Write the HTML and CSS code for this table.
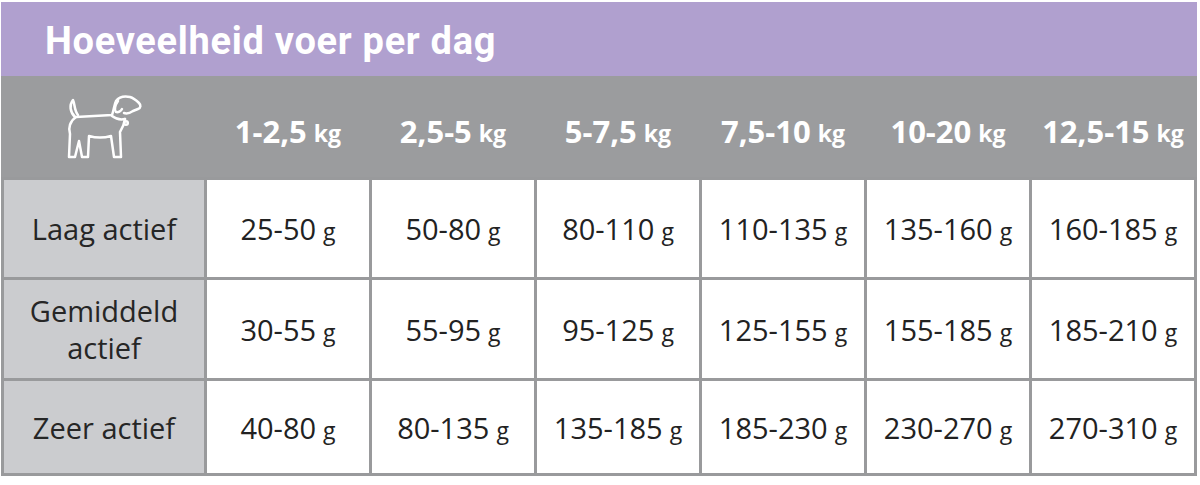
FILE: index.html
```html
<!DOCTYPE html>
<html lang="nl">
<head>
<meta charset="utf-8">
<title>Hoeveelheid voer per dag</title>
<link rel="stylesheet" href="styles.css">
</head>
<body>
<div class="sheet">
  <div class="title">Hoeveelheid voer per dag</div>
  <div class="grid">
    <div class="hcell icon-cell">
      <svg class="dog" viewBox="60 92 86 72" width="86" height="72" fill="none" stroke="#fff" stroke-width="2.5" stroke-linecap="round" stroke-linejoin="round">
        <path d="M75 117 C70 112 69 105 73 100 C75 104 74 110 78 115"/>
        <path d="M76 117 L112 115 C114 110 114 105 116 101 C119 97 125 96 130 97 C134 98 137 101 139 103 C141 105 141 108 138 109 L133 111 C130 113 127 114 124 113"/>
        <path d="M118 101 C115 105 114 110 116 112 C118 113 121 111 122 109"/>
        <path d="M112 116 C116 119 121 120 125 119"/>
        <circle cx="126" cy="123" r="1.8"/>
        <path d="M125 119 C124 125 122 129 120 132 L121 157 L114 157 L111 136 C104 138 96 138 89 136 L88 157 L82 157 L79 141 L75 157 L69 157 L70 134 C68 128 70 121 76 117"/>
      </svg>
    </div>
    <div class="hcell">1-2,5<span class="u">kg</span></div>
    <div class="hcell">2,5-5<span class="u">kg</span></div>
    <div class="hcell">5-7,5<span class="u">kg</span></div>
    <div class="hcell">7,5-10<span class="u">kg</span></div>
    <div class="hcell">10-20<span class="u">kg</span></div>
    <div class="hcell">12,5-15<span class="u">kg</span></div>

    <div class="lcell">Laag actief</div>
    <div class="cell">25-50<span class="u">g</span></div>
    <div class="cell">50-80<span class="u">g</span></div>
    <div class="cell">80-110<span class="u">g</span></div>
    <div class="cell">110-135<span class="u">g</span></div>
    <div class="cell">135-160<span class="u">g</span></div>
    <div class="cell">160-185<span class="u">g</span></div>

    <div class="lcell">Gemiddeld<br>actief</div>
    <div class="cell">30-55<span class="u">g</span></div>
    <div class="cell">55-95<span class="u">g</span></div>
    <div class="cell">95-125<span class="u">g</span></div>
    <div class="cell">125-155<span class="u">g</span></div>
    <div class="cell">155-185<span class="u">g</span></div>
    <div class="cell">185-210<span class="u">g</span></div>

    <div class="lcell">Zeer actief</div>
    <div class="cell">40-80<span class="u">g</span></div>
    <div class="cell">80-135<span class="u">g</span></div>
    <div class="cell">135-185<span class="u">g</span></div>
    <div class="cell">185-230<span class="u">g</span></div>
    <div class="cell">230-270<span class="u">g</span></div>
    <div class="cell">270-310<span class="u">g</span></div>
  </div>
</div>
</body>
</html>
```
FILE: styles.css
```css
html, body {
  margin: 0;
  padding: 0;
  background: #ffffff;
}
.sheet {
  width: 1196px;
  margin: 2px 0 0 1px;
}
.title {
  height: 74px;
  background: #b0a0cf;
  color: #ffffff;
  font-family: Roboto, "Liberation Sans", sans-serif;
  font-weight: 700;
  font-size: 38px;
  letter-spacing: 0.7px;
  display: flex;
  align-items: center;
  padding-left: 44px;
  padding-top: 4px;
  box-sizing: border-box;
}
.grid {
  display: grid;
  grid-template-columns: 200px repeat(6, 1fr);
  grid-template-rows: 101px 97px 98px 92px;
  gap: 3px;
  padding: 0 3px 3px 3px;
  background: #999a9c;
}
.hcell {
  background: #9b9c9e;
  margin-right: -3px;
  color: #ffffff;
  font-family: "Open Sans", "Liberation Sans", sans-serif;
  font-weight: 700;
  font-size: 31px;
  display: flex;
  align-items: center;
  justify-content: center;
  padding-top: 8px;
  padding-right: 3px;
  box-sizing: border-box;
}
.hcell:last-child {
  margin-right: 0;
}
.hcell .u {
  font-size: 23px;
  margin-left: 7px;
  padding-top: 5px;
}
.icon-cell {
  margin-left: -3px;
  padding-top: 0;
  align-items: flex-start;
  justify-content: flex-start;
  padding-left: 59px;
}
.dog {
  display: block;
  margin-top: 16px;
}
.lcell {
  background: #cbcccf;
  color: #262626;
  font-family: "Open Sans", "Liberation Sans", sans-serif;
  font-size: 29px;
  line-height: 37px;
  text-align: center;
  display: flex;
  align-items: center;
  justify-content: center;
}
.cell {
  background: #ffffff;
  color: #222222;
  font-family: "Open Sans", "Liberation Sans", sans-serif;
  font-size: 29px;
  display: flex;
  align-items: center;
  justify-content: center;
}
.cell .u {
  font-size: 23px;
  margin-left: 7px;
  padding-top: 5px;
}
```
